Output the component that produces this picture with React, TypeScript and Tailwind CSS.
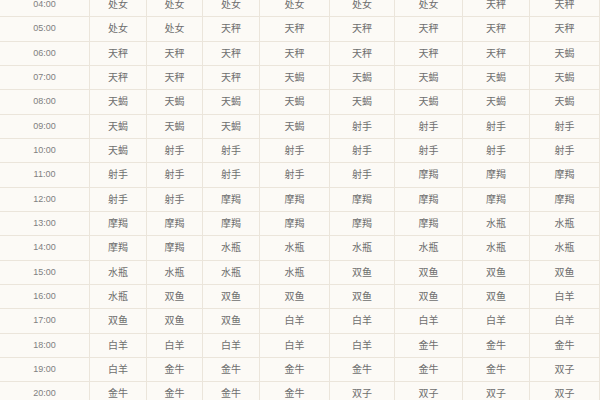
const widths = [
  "w-[90px]",
  "w-[57px]",
  "w-[56px]",
  "w-[57px]",
  "w-[70px]",
  "w-[65px]",
  "w-[68px]",
  "w-[67px]",
  "w-[70px]",
];

const rows: [string, string[]][] = [
  ["04:00", ["处女", "处女", "处女", "处女", "处女", "处女", "天秤", "天秤"]],
  ["05:00", ["处女", "处女", "天秤", "天秤", "天秤", "天秤", "天秤", "天秤"]],
  ["06:00", ["天秤", "天秤", "天秤", "天秤", "天秤", "天秤", "天秤", "天蝎"]],
  ["07:00", ["天秤", "天秤", "天秤", "天蝎", "天蝎", "天蝎", "天蝎", "天蝎"]],
  ["08:00", ["天蝎", "天蝎", "天蝎", "天蝎", "天蝎", "天蝎", "天蝎", "天蝎"]],
  ["09:00", ["天蝎", "天蝎", "天蝎", "天蝎", "射手", "射手", "射手", "射手"]],
  ["10:00", ["天蝎", "射手", "射手", "射手", "射手", "射手", "射手", "射手"]],
  ["11:00", ["射手", "射手", "射手", "射手", "射手", "摩羯", "摩羯", "摩羯"]],
  ["12:00", ["射手", "射手", "摩羯", "摩羯", "摩羯", "摩羯", "摩羯", "摩羯"]],
  ["13:00", ["摩羯", "摩羯", "摩羯", "摩羯", "摩羯", "摩羯", "水瓶", "水瓶"]],
  ["14:00", ["摩羯", "摩羯", "水瓶", "水瓶", "水瓶", "水瓶", "水瓶", "水瓶"]],
  ["15:00", ["水瓶", "水瓶", "水瓶", "水瓶", "双鱼", "双鱼", "双鱼", "双鱼"]],
  ["16:00", ["水瓶", "双鱼", "双鱼", "双鱼", "双鱼", "双鱼", "双鱼", "白羊"]],
  ["17:00", ["双鱼", "双鱼", "双鱼", "白羊", "白羊", "白羊", "白羊", "白羊"]],
  ["18:00", ["白羊", "白羊", "白羊", "白羊", "白羊", "金牛", "金牛", "金牛"]],
  ["19:00", ["白羊", "金牛", "金牛", "金牛", "金牛", "金牛", "金牛", "双子"]],
  ["20:00", ["金牛", "金牛", "金牛", "金牛", "双子", "双子", "双子", "双子"]],
];

export default function App() {
  return (
    <div className="w-[600px] h-[400px] overflow-hidden bg-[#fcfaf6] font-['Liberation_Sans','Noto_Sans_CJK_SC',sans-serif] text-[10px] text-[#6e6e6e]">
      <div className="-mt-[7px]">
        {rows.map(([time, signs]) => (
          <div
            key={time}
            className="flex h-[24.33px] border-b border-[#ebe5db]"
          >
            <div className={`${widths[0]} flex items-center justify-center border-r border-[#ebe5db] text-[9px] text-[#808080]`}>
              {time}
            </div>
            {signs.map((s, i) => (
              <div
                key={i}
                className={`${widths[i + 1]} flex items-center justify-center border-r border-[#ebe5db]`}
              >
                {s}
              </div>
            ))}
          </div>
        ))}
      </div>
    </div>
  );
}
